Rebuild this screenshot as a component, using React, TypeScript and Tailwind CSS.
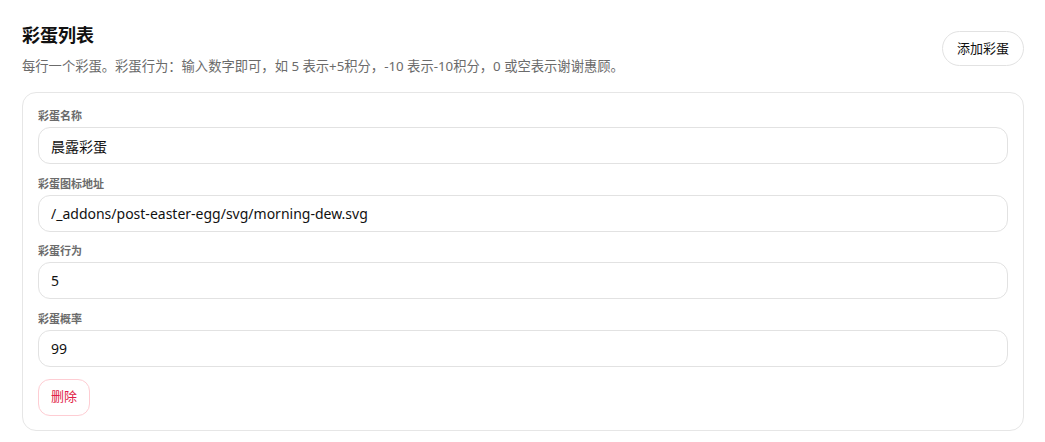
import { useState } from 'react'

type Egg = {
  name: string
  icon: string
  action: string
  chance: string
}

const font = { fontFamily: '"Noto Sans", "Noto Sans CJK SC", sans-serif' }

function Field({ label, value }: { label: string; value: string }) {
  return (
    <div className="flex flex-col gap-[4px]">
      <label className="text-[11px] leading-[14px] font-bold text-[#6b6b6b]">{label}</label>
      <input
        readOnly
        value={value}
        className="h-[37px] w-full rounded-[12px] border border-[#e2e2e2] bg-white px-3 text-[14px] text-[#111] outline-none"
        style={font}
      />
    </div>
  )
}

export default function App() {
  const [eggs] = useState<Egg[]>([
    {
      name: '晨露彩蛋',
      icon: '/_addons/post-easter-egg/svg/morning-dew.svg',
      action: '5',
      chance: '99',
    },
  ])

  return (
    <div className="min-h-screen bg-white pl-[22px] pr-[21px] pt-[22px]" style={font}>
      <div className="flex items-start justify-between">
        <div>
          <h2 className="text-[18px] leading-[26px] font-bold text-[#111]">彩蛋列表</h2>
          <p className="mt-[9px] text-[13.3px] leading-[18px] text-[#6b6b6b]">
            每行一个彩蛋。彩蛋行为：输入数字即可，如 5 表示+5积分，-10 表示-10积分，0 或空表示谢谢惠顾。
          </p>
        </div>
        <button className="mt-[9px] h-[35px] rounded-full border border-[#e2e2e2] bg-white px-[14px] text-[13px] text-[#111]">
          添加彩蛋
        </button>
      </div>

      <div className="mt-[17px] flex flex-col gap-4">
        {eggs.map((egg, i) => (
          <div key={i} className="rounded-[14px] border border-[#e6e6e6] px-[15px] pt-[16px] pb-[14px]">
            <div className="flex flex-col gap-[12.5px]">
              <Field label="彩蛋名称" value={egg.name} />
              <Field label="彩蛋图标地址" value={egg.icon} />
              <Field label="彩蛋行为" value={egg.action} />
              <Field label="彩蛋概率" value={egg.chance} />
            </div>
            <button className="mt-[12px] h-[37px] rounded-[12px] border border-[#fecdd3] bg-white px-[12px] text-[13px] text-[#e11d48]">
              删除
            </button>
          </div>
        ))}
      </div>
    </div>
  )
}
